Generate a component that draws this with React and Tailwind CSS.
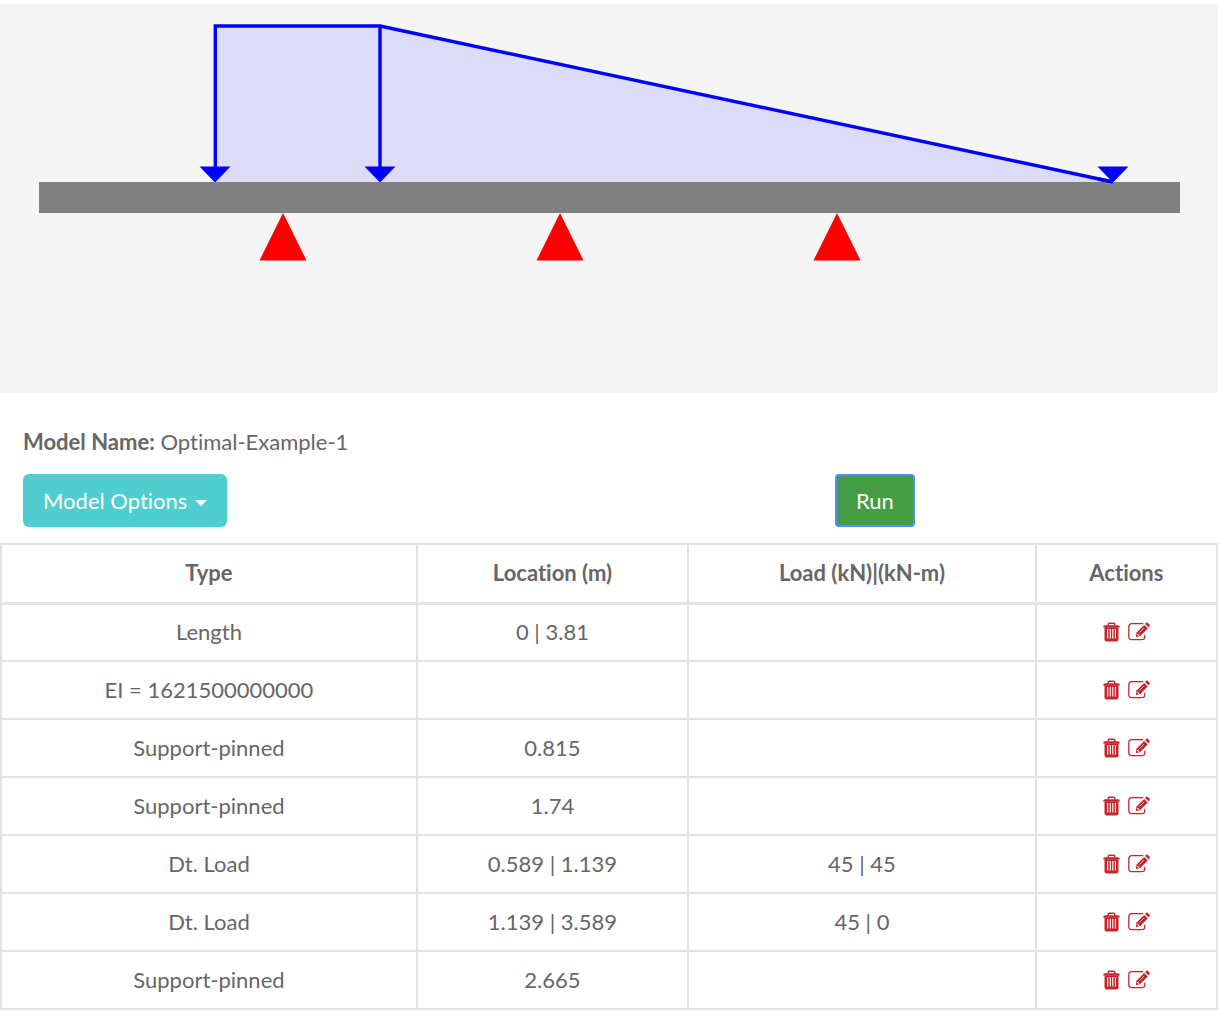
import React, { useState } from 'react';

const initialRows = [
  { id: 1, type: 'Length', location: '0 | 3.81', load: '' },
  { id: 2, type: 'EI = 1621500000000', location: '', load: '' },
  { id: 3, type: 'Support-pinned', location: '0.815', load: '' },
  { id: 4, type: 'Support-pinned', location: '1.74', load: '' },
  { id: 5, type: 'Dt. Load', location: '0.589 | 1.139', load: '45 | 45' },
  { id: 6, type: 'Dt. Load', location: '1.139 | 3.589', load: '45 | 0' },
  { id: 7, type: 'Support-pinned', location: '2.665', load: '' },
];

const supports = [283, 560, 837];
const arrows = [215, 380, 1113];

const BeamDiagram = () => (
  <svg viewBox="0 0 1218 389" className="block w-full bg-[#f5f5f5]" role="img" aria-label="Beam model">
    {/* Distributed loads */}
    <polygon points="215,22 380,22 1113,178 215,178" fill="#dcdcf7" />
    <path d="M215.3 176V22H380V176M380 22L1113 178" fill="none" stroke="#0000ff" strokeWidth="3.4" />
    {arrows.map((x) => (
      <polygon key={x} points={`${x - 15.5},162.5 ${x + 15.5},162.5 ${x},178.5`} fill="#0000ff" />
    ))}

    {/* Beam */}
    <rect x="39" y="178" width="1141" height="31" fill="#808080" />
    <path d="M1098 175L1113 178" stroke="#0000ff" strokeWidth="3.4" />

    {/* Pinned supports */}
    {supports.map((x) => (
      <polygon key={x} points={`${x},209 ${x + 23.5},256.5 ${x - 23.5},256.5`} fill="#ff0000" />
    ))}
  </svg>
);

const TrashIcon = () => (
  <svg viewBox="0 0 17 20" className="h-5 w-[17px]" fill="none" aria-hidden="true">
    <path d="M5.2 3.5V2.4Q5.2 1.2 6.4 1.2H10.6Q11.8 1.2 11.8 2.4V3.5" stroke="#c4262e" strokeWidth="1.5" />
    <path d="M.2 4.9Q.2 3.2 2 3.2H15Q16.8 3.2 16.8 4.9V5.4H.2Z" fill="#c4262e" />
    <path d="M1.5 5.3H15.5V17.6Q15.5 19.4 13.7 19.4H3.3Q1.5 19.4 1.5 17.6Z" fill="#c4262e" />
    <path d="M4.7 7V16.4M7.3 7V16.4M9.8 7V16.4M12.4 7V16.4" stroke="#fff" strokeWidth="1.1" />
  </svg>
);

const EditIcon = () => (
  <svg viewBox="0 0 22 20" className="h-5 w-[22px]" fill="none" aria-hidden="true">
    <path
      d="M15.2 1.7H4Q.8 1.7 .8 5V14.5Q.8 17.7 4 17.7H13.6Q16.8 17.7 16.8 14.5V12.8"
      stroke="#c4262e"
      strokeWidth="1.3"
    />
    <path d="M16.2 2.9L19.8 6.5L12.2 14.1L7.8 15.2L8.6 10.5Z" fill="#c4262e" />
    <path d="M17.1 2L18.3 .8Q19 .2 19.7 .8L21.6 2.7Q22.2 3.4 21.6 4.1L20.6 5.5Z" fill="#c4262e" />
    <path d="M11.4 10.6L15.9 6.1" stroke="#fff" strokeWidth=".7" />
    <path d="M9.4 12.2L10.9 13.7" stroke="#fff" strokeWidth="1.2" />
  </svg>
);

const App = () => {
  const [rows, setRows] = useState(initialRows);

  const removeRow = (id) => {
    setRows(rows.filter((row) => row.id !== id));
  };

  return (
    <div className="bg-white pt-1 pr-[3px] font-['Lato',sans-serif] text-[22px] leading-8 text-[#666] [font-variant-ligatures:none]">
      <BeamDiagram />

      <p className="mt-[33px] px-[23px]">
        <strong className="font-bold">Model Name:</strong> Optimal-Example-1
      </p>

      {/* Toolbar */}
      <div className="mt-4 mb-4 grid grid-cols-3">
        <div className="px-[23px]">
          <button
            type="button"
            className="flex h-[53px] items-center gap-2 rounded-md bg-[#50cdcf] px-5 whitespace-nowrap text-white"
          >
            Model Options
            <svg viewBox="0 0 12 6" className="mt-1 h-[6px] w-3" aria-hidden="true">
              <path d="M0 0H12L6 6Z" fill="#fff" />
            </svg>
          </button>
        </div>
        <div className="col-start-3 px-[23px]">
          <button
            type="button"
            className="h-[53px] rounded-sm border-2 border-[#4d90fe] bg-[#449d44] px-[19px] text-white"
          >
            Run
          </button>
        </div>
      </div>

      <table className="w-full table-fixed border-collapse text-center">
        <thead>
          <tr className="h-[59px]">
            <th className="w-[34.2%] border-2 border-b-3 border-[#e2e2e2] font-bold">Type</th>
            <th className="w-[22.3%] border-2 border-b-3 border-[#e2e2e2] font-bold">Location (m)</th>
            <th className="w-[28.6%] border-2 border-b-3 border-[#e2e2e2] font-bold">Load (kN)|(kN-m)</th>
            <th className="w-[14.9%] border-2 border-b-3 border-[#e2e2e2] font-bold">Actions</th>
          </tr>
        </thead>
        <tbody>
          {rows.map((row) => (
            <tr key={row.id} className="h-[58px]">
              <td className="border-2 border-[#e2e2e2]">{row.type}</td>
              <td className="border-2 border-[#e2e2e2]">{row.location}</td>
              <td className="border-2 border-[#e2e2e2]">{row.load}</td>
              <td className="border-2 border-[#e2e2e2]">
                <div className="flex items-center justify-center gap-2">
                  <button type="button" aria-label="Delete" onClick={() => removeRow(row.id)}>
                    <TrashIcon />
                  </button>
                  <button type="button" aria-label="Edit">
                    <EditIcon />
                  </button>
                </div>
              </td>
            </tr>
          ))}
        </tbody>
      </table>
    </div>
  );
};

export default App;
